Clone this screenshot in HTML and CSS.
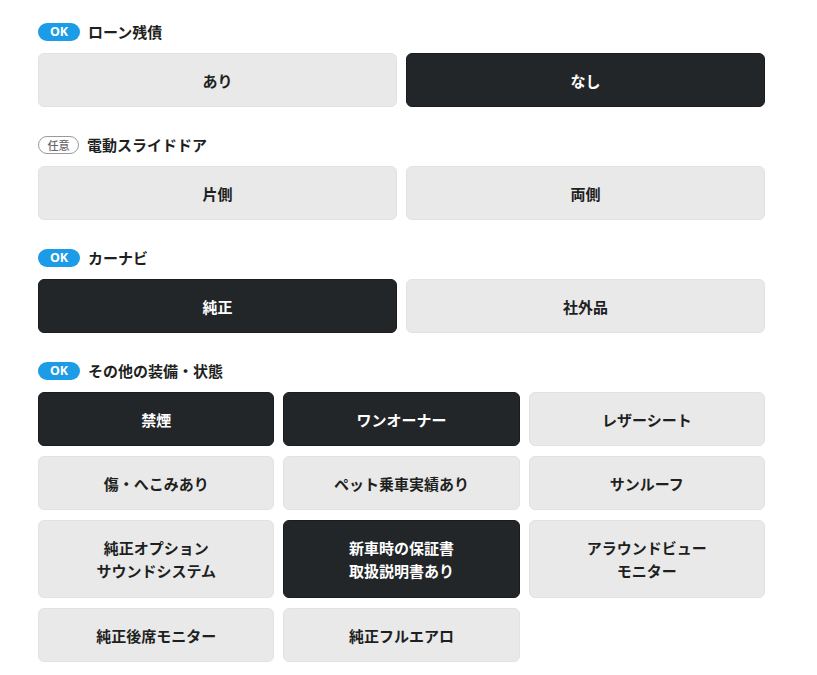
FILE: index.html
```html
<!DOCTYPE html>
<html lang="ja">
<head>
<meta charset="utf-8">
<link rel="stylesheet" href="styles.css">
</head>
<body>
<div class="form">
  <section class="field">
    <div class="label"><span class="badge ok">OK</span><span class="title">ローン残債</span></div>
    <div class="options two">
      <div class="opt">あり</div>
      <div class="opt on">なし</div>
    </div>
  </section>
  <section class="field">
    <div class="label"><span class="badge any">任意</span><span class="title">電動スライドドア</span></div>
    <div class="options two">
      <div class="opt">片側</div>
      <div class="opt">両側</div>
    </div>
  </section>
  <section class="field">
    <div class="label"><span class="badge ok">OK</span><span class="title">カーナビ</span></div>
    <div class="options two">
      <div class="opt on">純正</div>
      <div class="opt">社外品</div>
    </div>
  </section>
  <section class="field">
    <div class="label"><span class="badge ok">OK</span><span class="title">その他の装備・状態</span></div>
    <div class="options three">
      <div class="opt on">禁煙</div>
      <div class="opt on">ワンオーナー</div>
      <div class="opt">レザーシート</div>
      <div class="opt">傷・へこみあり</div>
      <div class="opt">ペット乗車実績あり</div>
      <div class="opt">サンルーフ</div>
      <div class="opt tall">純正オプション<br>サウンドシステム</div>
      <div class="opt tall on">新車時の保証書<br>取扱説明書あり</div>
      <div class="opt tall">アラウンドビュー<br>モニター</div>
      <div class="opt">純正後席モニター</div>
      <div class="opt">純正フルエアロ</div>
    </div>
  </section>
</div>
</body>
</html>
```
FILE: styles.css
```css
* { box-sizing: border-box; }
html, body { margin: 0; padding: 0; background: #fff; }
body {
  font-family: "Noto Sans CJK JP", "Noto Sans", sans-serif;
  color: #1e1f21;
}
.form {
  width: 727px;
  margin-left: 38px;
  padding-top: 23px;
  display: flex;
  flex-direction: column;
  gap: 29px;
}
.field { display: flex; flex-direction: column; gap: 12px; }
.label { display: flex; align-items: center; height: 18px; gap: 8px; }
.badge {
  display: inline-flex;
  align-items: center;
  justify-content: center;
  width: 42px;
  height: 18px;
  border-radius: 9px;
  font-size: 12.5px;
  font-weight: 700;
  line-height: 1;
}
.badge.ok { background: #1c9be6; color: #fff; font-family: "Noto Sans", sans-serif; }
.badge.any {
  width: 41px;
  background: #fff;
  border: 1px solid #9a9a9a;
  color: #666;
  font-size: 11px;
  font-weight: 500;
}
.title { font-size: 15px; font-weight: 600; line-height: 18px; }
.options { display: grid; column-gap: 9px; row-gap: 10px; }
.options.two { grid-template-columns: 1fr 1fr; }
.options.three { grid-template-columns: repeat(3, 1fr); }
.opt {
  height: 54px;
  display: flex;
  align-items: center;
  justify-content: center;
  text-align: center;
  background: #e9e9e9;
  border: 1px solid #e2e2e2;
  border-radius: 6px;
  font-size: 15px;
  font-weight: 600;
  line-height: 23px;
  color: #1e1f21;
}
.opt.tall { height: 78px; }
.opt.on { background: #232629; border-color: #1a1c1f; color: #fff; }
```
